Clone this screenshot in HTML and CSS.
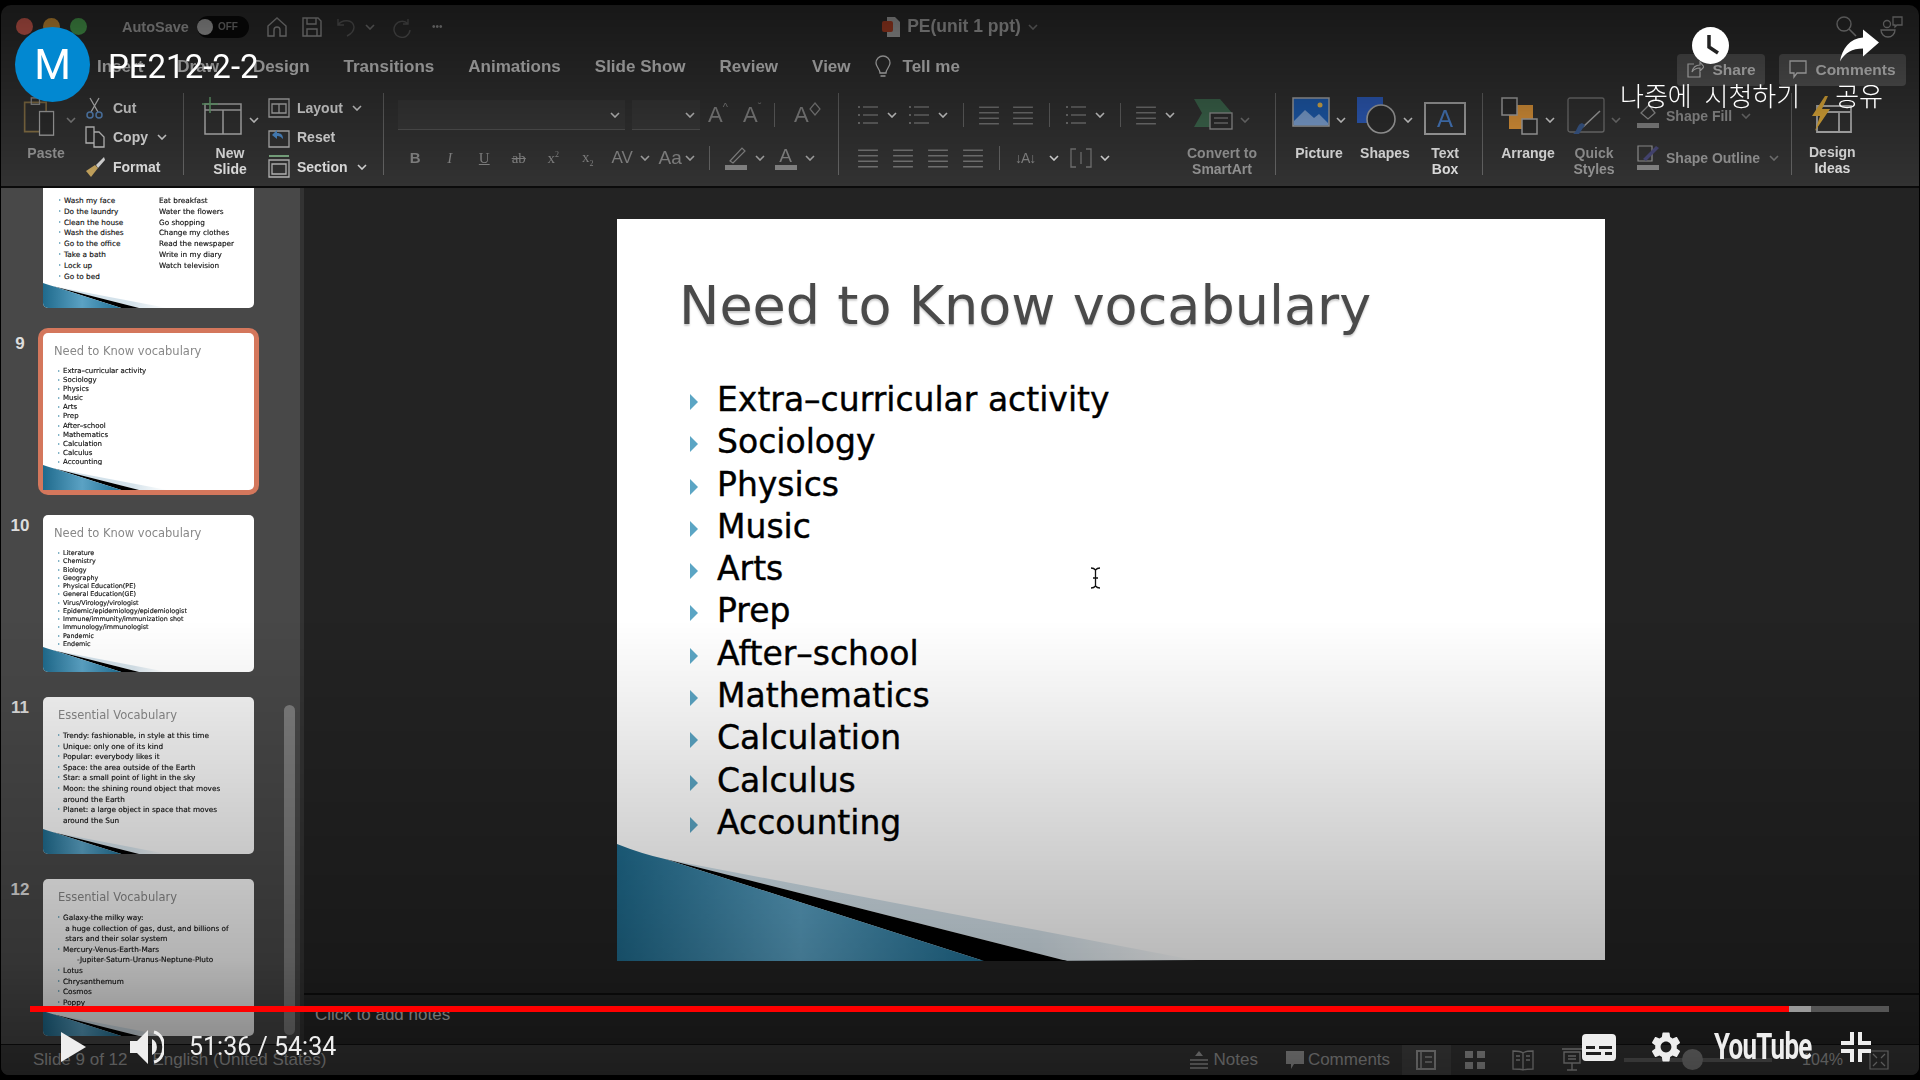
FILE: index.html
```html
<!DOCTYPE html>
<html lang="en">

<head>
  <meta charset="UTF-8">
  <title>PE212-2-2</title>
  <link rel="stylesheet" href="styles.css">
</head>

<body>
  <svg class="defs" width="0" height="0">
    <defs>
      <linearGradient id="blue" x1="0" x2="1" y1="0" y2="0">
        <stop offset="0" stop-color="#1f6a8c" />
        <stop offset=".5" stop-color="#5ba2c4" />
        <stop offset="1" stop-color="#1f6f94" />
      </linearGradient>
      <linearGradient id="pale" x1="0" x2="1" y1="0" y2="0">
        <stop offset="0" stop-color="#cfe0ea" />
        <stop offset=".7" stop-color="#d6e3eb" />
        <stop offset="1" stop-color="#d6e3eb" stop-opacity="0" />
      </linearGradient>
      <symbol id="swoosh" viewBox="0 0 988 117">
        <path fill="url(#pale)" d="M48 15 L582 117 L450 117Z" />
        <path fill="#000" d="M48 15 L450 117 L367 117Z" />
        <path fill="url(#blue)" d="M0 0 Q25 10 48 15 L367 117 L0 117Z" />
      </symbol>
      <symbol id="chev" viewBox="0 0 10 6">
        <path d="M1 1l4 4 4-4" fill="none" stroke="currentColor" stroke-width="1.6" />
      </symbol>
      <symbol id="lines" viewBox="0 0 20 20">
        <path d="M1 3h18M1 8h18M1 13h18M1 18h18" fill="none" stroke="currentColor" stroke-width="1.4" />
      </symbol>
      <symbol id="bullets" viewBox="0 0 22 22">
        <path d="M6 3h15M6 11h15M6 19h15" fill="none" stroke="currentColor" stroke-width="1.4" />
        <path d="M1 2h2v2H1zM1 10h2v2H1zM1 18h2v2H1z" fill="currentColor" />
      </symbol>
    </defs>
  </svg>

  <div class="window">
    <header class="titlebar">
      <div class="tb-left">
        <span class="light red"></span><span class="light yellow"></span><span class="light green"></span>
        <span class="autosave">AutoSave</span>
        <span class="toggle"><i></i>OFF</span>
        <svg class="tb-ico" viewBox="0 0 22 22"><path d="M2 10l9-8 9 8v10h-6v-6a3 3 0 0 0-6 0v6H2z" fill="none" stroke="currentColor" stroke-width="1.4" /></svg>
        <svg class="tb-ico" viewBox="0 0 22 22"><path d="M2 2h15l3 3v15H2zM6 2v6h9V2M6 20v-7h10v7" fill="none" stroke="currentColor" stroke-width="1.4" /></svg>
        <svg class="tb-ico dim" viewBox="0 0 22 22"><path d="M2 3v6h6M2 9c4-6 15-6 16 2 0 4-3 7-7 9" fill="none" stroke="currentColor" stroke-width="1.4" /></svg>
        <svg class="chev dim"><use href="#chev" /></svg>
        <svg class="tb-ico dim" viewBox="0 0 22 22"><path d="M17 3v5h-5M17 8a8 8 0 1 0 2 6" fill="none" stroke="currentColor" stroke-width="1.4" /></svg>
        <span class="dots">•••</span>
      </div>
      <div class="doc-title">
        <svg width="18" height="20" viewBox="0 0 18 20"><path d="M5 0h8l5 5v15H5z" fill="#bbb" /><rect x="0" y="4" width="11" height="11" rx="2" fill="#c4492a" /></svg>
        PE(unit 1 ppt)
        <svg class="chev dim"><use href="#chev" /></svg>
      </div>
      <div class="tb-right">
        <svg width="22" height="22" viewBox="0 0 22 22"><circle cx="9" cy="9" r="7" fill="none" stroke="currentColor" stroke-width="1.4" /><path d="M14 14l7 7" stroke="currentColor" stroke-width="1.6" /></svg>
        <svg width="24" height="24" viewBox="0 0 24 24"><path d="M14 2h9v8h-5l-2 2v-2h-2z M2 15h14a7 7 0 0 1-14 0z" fill="none" stroke="currentColor" stroke-width="1.3" /><circle cx="8" cy="9" r="3.5" fill="none" stroke="currentColor" stroke-width="1.3" /></svg>
      </div>
    </header>

    <nav class="tabs">
      <span>Insert</span><span>Draw</span><span>Design</span><span>Transitions</span><span>Animations</span><span>Slide Show</span><span>Review</span><span>View</span>
      <span class="tell">
        <svg width="16" height="24" viewBox="0 0 16 24"><path d="M5 18c0-4-4-6-4-10a7 7 0 0 1 14 0c0 4-4 6-4 10zM5.500 21h5" fill="none" stroke="currentColor" stroke-width="1.3" /></svg>
        Tell me
      </span>
      <div class="tab-btns">
        <button class="tab-btn share"><svg width="18" height="18" viewBox="0 0 18 18"><path d="M8 3H2v13h12v-5M6 11c1-5 4-7 8-7V1l4 5-4 4V7c-4 0-6 1-8 4z" fill="none" stroke="currentColor" stroke-width="1.2" /></svg>Share</button>
        <button class="tab-btn"><svg width="18" height="20" viewBox="0 0 18 20"><path d="M1 1h16v12H8l-3 4v-4H1z" fill="none" stroke="currentColor" stroke-width="1.3" /></svg>Comments</button>
      </div>
    </nav>

    <section class="ribbon">
      <div class="grp g-clip">
        <div class="big">
          <div class="big-ico paste-ico">
            <svg width="38" height="40" viewBox="0 0 46 44" preserveAspectRatio="none"><path d="M2 6h26v32H2z" fill="none" stroke="#8a7448" stroke-width="2" /><rect x="10" y="1" width="10" height="7" fill="none" stroke="#999" stroke-width="1.5" /><rect x="20" y="16" width="17" height="26" fill="#2e2e2e" stroke="#aaa" stroke-width="1.500" /></svg>
            <svg class="chev dim"><use href="#chev" /></svg>
          </div>
          <span class="lbl dim-t">Paste</span>
        </div>
        <div class="small-col">
          <div class="small"><svg width="20" height="22" viewBox="0 0 20 22"><path d="M5 1l8 14M14 1L6 15" stroke="#ccc" stroke-width="1.300" fill="none" /><circle cx="5" cy="18" r="3" fill="none" stroke="#5c8cc4" stroke-width="1.500" /><circle cx="14" cy="18" r="3" fill="none" stroke="#5c8cc4" stroke-width="1.500" /></svg>Cut</div>
          <div class="small"><svg width="22" height="22" viewBox="0 0 22 22"><path d="M2 1h8v16H2zM10 6h5l5 5v10h-10z" fill="#2e2e2e" stroke="#ccc" stroke-width="1.300" /></svg>Copy <svg class="chev"><use href="#chev" /></svg></div>
          <div class="small"><svg width="22" height="22" viewBox="0 0 22 22"><path d="M20 1l-8 8 2 3 7-8z" fill="#ddd" /><path d="M11 9l-9 6 5 6 7-9z" fill="#c9a860" /></svg>Format</div>
        </div>
      </div>

      <div class="grp g-slides">
        <div class="big">
          <div class="big-ico">
            <svg width="42" height="40" viewBox="0 0 42 40"><path d="M4 7h36v30H4zM4 13h36M22 13v24" fill="none" stroke="#bbb" stroke-width="1.500" /><path d="M9 0v16M1 7h16" stroke="#6fae7a" stroke-width="1.500" /></svg>
            <svg class="chev"><use href="#chev" /></svg>
          </div>
          <span class="lbl">New<br>Slide</span>
        </div>
        <div class="small-col">
          <div class="small"><svg width="22" height="22" viewBox="0 0 22 22"><path d="M1 2h20v18H1zM4 7h14v9H4zM11 7v9" fill="none" stroke="#bbb" stroke-width="1.300" /></svg>Layout <svg class="chev"><use href="#chev" /></svg></div>
          <div class="small"><svg width="22" height="22" viewBox="0 0 22 22"><path d="M1 5h20v16H1z" fill="none" stroke="#bbb" stroke-width="1.300" /><path d="M4 9l5-5v3c4 0 6 2 6 6-2-2-3-3-6-3v3z" fill="#4f8fd0" /></svg>Reset</div>
          <div class="small"><svg width="22" height="24" viewBox="0 0 22 24"><path d="M1 1h20" stroke="#7fae86" stroke-width="2" /><path d="M1 5h20v17H1zM4 9h14v10H4z" fill="none" stroke="#bbb" stroke-width="1.300" /></svg>Section <svg class="chev"><use href="#chev" /></svg></div>
        </div>
      </div>

      <div class="grp g-font">
        <div class="row">
          <span class="select wide"><svg class="chev"><use href="#chev" /></svg></span>
          <span class="select narrow"><svg class="chev"><use href="#chev" /></svg></span>
          <span class="glyph big-a g1">A<sup>^</sup></span>
          <span class="glyph big-a g2">A<sup>ˇ</sup></span>
          <span class="sep"></span>
          <span class="glyph big-a g3">A<svg width="12" height="14" viewBox="0 0 12 14"><path d="M6 1l5 6-5 6-5-6z" fill="none" stroke="currentColor" stroke-width="1.200" /></svg></span>
        </div>
        <div class="row row2">
          <span class="slot"><b>B</b></span><span class="slot"><i>I</i></span><span class="slot"><u>U</u></span><span class="slot"><s>ab</s></span>
          <span class="slot">x<sup>2</sup></span><span class="slot">x<sub>2</sub></span><span class="slot small-t">AV</span>
          <svg class="chev"><use href="#chev" /></svg>
          <span class="glyph aa">Aa</span>
          <svg class="chev"><use href="#chev" /></svg>
          <span class="sep sep-a"></span>
          <span class="colour"><svg width="22" height="18" viewBox="0 0 22 18"><path d="M5 14L17 1l3 3L8 16z" fill="none" stroke="currentColor" stroke-width="1.200" /></svg><i></i></span>
          <svg class="chev"><use href="#chev" /></svg>
          <span class="colour text-col">A<i></i></span>
          <svg class="chev"><use href="#chev" /></svg>
        </div>
      </div>

      <div class="grp g-para">
        <div class="para-rows">
          <div class="row">
            <svg class="list"><use href="#bullets" /></svg><svg class="chev"><use href="#chev" /></svg>
            <svg class="list"><use href="#bullets" /></svg><svg class="chev"><use href="#chev" /></svg>
            <span class="sep"></span>
            <svg class="list"><use href="#lines" /></svg><svg class="list"><use href="#lines" /></svg>
            <span class="sep"></span>
            <svg class="list"><use href="#bullets" /></svg><svg class="chev"><use href="#chev" /></svg>
            <span class="sep"></span>
            <svg class="list"><use href="#lines" /></svg><svg class="chev"><use href="#chev" /></svg>
          </div>
          <div class="row row-al">
            <svg class="list"><use href="#lines" /></svg><svg class="list"><use href="#lines" /></svg>
            <svg class="list"><use href="#lines" /></svg><svg class="list"><use href="#lines" /></svg>
            <span class="sep"></span>
            <span class="txt-dir">↓A↓</span><svg class="chev"><use href="#chev" /></svg>
            <svg class="list" viewBox="0 0 22 22"><path d="M6 2H1v18h5M16 2h5v18h-5M11 5v12" fill="none" stroke="currentColor" stroke-width="1.300" /></svg><svg class="chev"><use href="#chev" /></svg>
          </div>
        </div>
        <div class="big dim-b">
          <div class="big-ico">
            <svg width="40" height="34" viewBox="0 0 40 34"><path d="M0 2h26l12 14-10 14H0l8-14z" fill="#3f6a50" /><rect x="16" y="16" width="22" height="16" fill="#2e2e2e" stroke="#999" stroke-width="1.300" /><path d="M20 21h14M20 26h14" stroke="#999" /></svg>
            <svg class="chev"><use href="#chev" /></svg>
          </div>
          <span class="lbl">Convert to<br>SmartArt</span>
        </div>
      </div>

      <div class="grp g-insert">
        <div class="big">
          <div class="big-ico">
            <svg width="38" height="30" viewBox="0 0 38 30"><rect x="1" y="1" width="36" height="28" fill="#1f5fb5" stroke="#aaa" stroke-width="1.500" /><path d="M2 24l11-11 9 8 5-4 9 9v2H2z" fill="#cfe0f5" opacity=".55" /><circle cx="28" cy="8" r="2.500" fill="#e2b650" /></svg>
            <svg class="chev"><use href="#chev" /></svg>
          </div>
          <span class="lbl">Picture</span>
        </div>
        <div class="big">
          <div class="big-ico">
            <svg width="40" height="38" viewBox="0 0 40 38"><rect x="0" y="0" width="26" height="26" fill="#2f5fc0" /><circle cx="24" cy="22" r="14" fill="#2e2e2e" stroke="#aaa" stroke-width="1.600" /></svg>
            <svg class="chev"><use href="#chev" /></svg>
          </div>
          <span class="lbl">Shapes</span>
        </div>
        <div class="big">
          <div class="big-ico">
            <div class="textbox">A</div>
          </div>
          <span class="lbl">Text<br>Box</span>
        </div>
      </div>

      <div class="grp g-arrange">
        <div class="big">
          <div class="big-ico">
            <svg width="38" height="38" viewBox="0 0 38 38"><rect x="8" y="8" width="24" height="24" fill="#e49a3c" /><rect x="1" y="1" width="15" height="17" fill="#2e2e2e" stroke="#aaa" stroke-width="1.500" /><rect x="21" y="22" width="15" height="15" fill="#2e2e2e" stroke="#aaa" stroke-width="1.500" /></svg>
            <svg class="chev"><use href="#chev" /></svg>
          </div>
          <span class="lbl">Arrange</span>
        </div>
        <div class="big dim-b">
          <div class="big-ico">
            <svg width="38" height="38" viewBox="0 0 38 38"><rect x="1" y="1" width="36" height="34" rx="2" fill="none" stroke="#777" stroke-width="1.300" /><path d="M33 14L16 30" stroke="#aaa" stroke-width="1.500" /><path d="M18 28l-6 9h-6c4-2 4-10 9-11z" fill="#3b5a8c" /></svg>
            <svg class="chev"><use href="#chev" /></svg>
          </div>
          <span class="lbl">Quick<br>Styles</span>
        </div>
        <div class="shape-col dim-b">
          <div class="small"><svg width="22" height="26" viewBox="0 0 22 26"><path d="M4 10l8-8 6 8-7 6z" fill="none" stroke="#999" stroke-width="1.300" /><rect y="20" width="22" height="5" fill="#888" /></svg>Shape Fill <svg class="chev"><use href="#chev" /></svg></div>
          <div class="small"><svg width="22" height="26" viewBox="0 0 22 26"><path d="M1 1h14v15H1z" fill="none" stroke="#999" stroke-width="1.200" /><path d="M6 14L19 1l3 2L9 16z" fill="#4a4a7a" /><rect y="20" width="22" height="5" fill="#888" /></svg>Shape Outline <svg class="chev"><use href="#chev" /></svg></div>
        </div>
      </div>

      <div class="g-ideas">
        <div class="big">
          <div class="big-ico">
            <svg width="42" height="38" viewBox="0 0 42 38"><path d="M6 10h34v26H6zM6 16h34M28 16v20" fill="none" stroke="#bbb" stroke-width="1.800" /><path d="M14 0L1 20h8l-5 15L19 13h-8l6-13z" fill="#e9b23c" /></svg>
          </div>
          <span class="lbl">Design<br>Ideas</span>
        </div>
      </div>
    </section>

    <main class="main">
      <aside class="sidebar">
        <div class="thumb-list">
          <div class="thumb-row">
            <span class="num"></span>
            <div class="thumb t8">
              <div class="t-cols">
                <ul>
                  <li>Wash my face</li><li>Do the laundry</li><li>Clean the house</li><li>Wash the dishes</li><li>Go to the office</li><li>Take a bath</li><li>Lock up</li><li>Go to bed</li>
                </ul>
                <ul class="plain">
                  <li>Eat breakfast</li><li>Water the flowers</li><li>Go shopping</li><li>Change my clothes</li><li>Read the newspaper</li><li>Write in my diary</li><li>Watch television</li>
                </ul>
              </div>
              <svg class="t-swoosh"><use href="#swoosh" /></svg>
            </div>
          </div>
          <div class="thumb-row">
            <span class="num">9</span>
            <div class="thumb selected">
              <h4>Need to Know vocabulary</h4>
              <ul>
                <li>Extra–curricular activity</li><li>Sociology</li><li>Physics</li><li>Music</li><li>Arts</li><li>Prep</li><li>After–school</li><li>Mathematics</li><li>Calculation</li><li>Calculus</li><li>Accounting</li>
              </ul>
              <svg class="t-swoosh"><use href="#swoosh" /></svg>
            </div>
          </div>
          <div class="thumb-row">
            <span class="num">10</span>
            <div class="thumb t10">
              <h4>Need to Know vocabulary</h4>
              <ul>
                <li>Literature</li><li>Chemistry</li><li>Biology</li><li>Geography</li><li>Physical Education(PE)</li><li>General Education(GE)</li><li>Virus/Virology/virologist</li><li>Epidemic/epidemiology/epidemiologist</li><li>Immune/immunity/immunization shot</li><li>Immunology/immunologist</li><li>Pandemic</li><li>Endemic</li>
              </ul>
              <svg class="t-swoosh"><use href="#swoosh" /></svg>
            </div>
          </div>
          <div class="thumb-row">
            <span class="num">11</span>
            <div class="thumb t-ess">
              <h4>Essential Vocabulary</h4>
              <ul>
                <li>Trendy: fashionable, in style at this time</li><li>Unique: only one of its kind</li><li>Popular: everybody likes it</li><li>Space: the area outside of the Earth</li><li>Star: a small point of light in the sky</li><li>Moon: the shining round object that moves around the Earth</li><li>Planet: a large object in space that moves around the Sun</li>
              </ul>
              <svg class="t-swoosh"><use href="#swoosh" /></svg>
            </div>
          </div>
          <div class="thumb-row">
            <span class="num">12</span>
            <div class="thumb t-ess">
              <h4>Essential Vocabulary</h4>
              <ul>
                <li>Galaxy-the milky way:<br>&nbsp;a huge collection of gas, dust, and billions of<br>&nbsp;stars and their solar system</li><li>Mercury-Venus-Earth-Mars<br>&nbsp; &nbsp; &nbsp; -Jupiter-Saturn-Uranus-Neptune-Pluto</li><li>Lotus</li><li>Chrysanthemum</li><li>Cosmos</li><li>Poppy</li>
              </ul>
              <svg class="t-swoosh"><use href="#swoosh" /></svg>
            </div>
          </div>
        </div>
        <div class="scrollbar"></div>
      </aside>

      <div class="stage">
        <div class="slide-area">
          <article class="slide">
            <h1>Need to Know vocabulary</h1>
            <ul>
              <li>Extra–curricular activity</li>
              <li>Sociology</li>
              <li>Physics</li>
              <li>Music</li>
              <li>Arts</li>
              <li>Prep</li>
              <li>After–school</li>
              <li>Mathematics</li>
              <li>Calculation</li>
              <li>Calculus</li>
              <li>Accounting</li>
            </ul>
            <svg class="s-swoosh"><use href="#swoosh" /></svg>
            <svg class="ibeam" width="11" height="22" viewBox="0 0 11 22"><path d="M1 1c2 0 3 0 4.500 2C7 1 8 1 10 1M1 21c2 0 3 0 4.500-2 1.500 2 2.500 2 4.500 2M5.500 3v16M3 11h5" fill="none" stroke="#111" stroke-width="1.300" /></svg>
          </article>
        </div>
        <div class="notes">Click to add notes</div>
      </div>
    </main>

    <footer class="status">
      <span>Slide 9 of 12</span>
      <span class="lang">English (United States)</span>
      <div class="status-right">
        <span class="st-item"><svg width="20" height="20" viewBox="0 0 20 20"><path d="M10 1l4 5H6z" fill="currentColor" /><path d="M1 10h18M1 14h18M1 18h18" stroke="currentColor" stroke-width="1.500" /></svg>Notes</span>
        <span class="st-item st-comments"><svg width="18" height="20" viewBox="0 0 18 20"><path d="M0 1h18v13H8l-3 5v-5H0z" fill="currentColor" /></svg>Comments</span>
        <span class="view active"><svg width="20" height="20" viewBox="0 0 20 20"><path d="M1 1h18v18H1z" fill="none" stroke="currentColor" stroke-width="2" /><path d="M5 1v18M9 7h7M9 12h7" stroke="currentColor" stroke-width="1.500" /></svg></span>
        <span class="view"><svg width="22" height="22" viewBox="0 0 22 22"><path d="M1 2h8v7H1zM13 2h8v7h-8zM1 13h8v7H1zM13 13h8v7h-8z" fill="currentColor" /></svg></span>
        <span class="view"><svg width="22" height="22" viewBox="0 0 22 22"><path d="M1 2c4 0 8 0 10 2 2-2 6-2 10-2v18c-4 0-8 0-10 1-2-1-6-1-10-1zM11 4v17M4 7h4M4 11h4M14 7h4M14 11h4" fill="none" stroke="currentColor" stroke-width="1.300" /></svg></span>
        <span class="view"><svg width="22" height="24" viewBox="0 0 22 24"><path d="M1 1h20M3 4h16v11H3zM11 15v7M6 22h10M7 8h8M7 11h8" fill="none" stroke="currentColor" stroke-width="1.400" /></svg></span>
        <span class="zoom-slider"><i></i></span>
        <span class="pct">104%</span>
        <svg class="fit" width="20" height="20" viewBox="0 0 20 20"><path d="M1 1h18v18H1zM4 4l4 4M16 4l-4 4M4 16l4-4M16 16l-4-4" fill="none" stroke="currentColor" stroke-width="1.200" /></svg>
      </div>
    </footer>
  </div>

  <div class="shade"></div>

  <div class="yt-top">
    <div class="avatar">M</div>
    <div class="yt-title">PE212-2-2</div>
    <div class="yt-acts">
      <div class="yt-act">
        <svg width="37" height="37" viewBox="0 0 37 37"><circle cx="18.500" cy="18.500" r="18.500" fill="#fff" /><path d="M17 8v12l9 6" fill="none" stroke="#222" stroke-width="3.500" /></svg>
        <span>나중에 시청하기</span>
      </div>
      <div class="yt-act">
        <svg width="40" height="32" viewBox="0 0 40 32"><path d="M24 0l16 13-16 14v-8C13 19 6 23 1 32 3 19 11 9 24 8z" fill="#fff" /></svg>
        <span>공유</span>
      </div>
    </div>
  </div>

  <div class="yt-progress"><i class="played"></i><i class="buffer"></i></div>

  <div class="yt-controls">
    <svg class="play" width="25" height="30" viewBox="0 0 25 30"><path d="M0 0l25 15L0 30z" fill="#eee" /></svg>
    <svg class="vol" width="34" height="34" viewBox="0 0 34 34"><path d="M0 11h7L18 0v34L7 23H0z" fill="#eee" /><path d="M22 9a9 9 0 0 1 0 16z" fill="#eee" /><path d="M24 2c13 3 13 27 0 30" fill="none" stroke="#eee" stroke-width="3" /></svg>
    <span class="time">51:36 / 54:34</span>
    <div class="yt-right">
      <svg width="34" height="27" viewBox="0 0 34 27"><path fill-rule="evenodd" d="M4 0h26a4 4 0 0 1 4 4v19a4 4 0 0 1-4 4H4a4 4 0 0 1-4-4V4a4 4 0 0 1 4-4zM4 12v3h9v-3zM17 12v3h13v-3zM4 18v3h15v-3zM23 18v3h7v-3z" fill="#eee" /></svg>
      <svg class="gear" width="36" height="36" viewBox="0 0 24 24"><path fill="#eee" d="M19.140 12.940c.04-.3.06-.61.06-.94 0-.32-.02-.64-.07-.94l2.030-1.580c.18-.14.23-.41.12-.61l-1.920-3.320c-.12-.22-.37-.29-.59-.22l-2.390.96c-.5-.38-1.030-.7-1.620-.94l-.36-2.540c-.04-.24-.24-.41-.48-.41h-3.840c-.24 0-.43.17-.47.41l-.36 2.540c-.59.24-1.130.57-1.620.94l-2.390-.96c-.22-.08-.47 0-.59.22L2.740 8.870c-.12.21-.08.47.12.61l2.030 1.580c-.05.3-.09.63-.09.94s.02.64.07.94l-2.030 1.580c-.18.14-.23.41-.12.61l1.920 3.320c.12.22.37.29.59.22l2.390-.96c.5.38 1.030.7 1.620.94l.36 2.540c.05.24.24.41.48.41h3.840c.24 0 .44-.17.47-.41l.36-2.540c.59-.24 1.130-.56 1.620-.94l2.390.96c.22.08.47 0 .59-.22l1.920-3.320c.12-.22.07-.47-.12-.61l-2.010-1.580zM12 15.600c-1.980 0-3.600-1.620-3.600-3.600s1.620-3.600 3.600-3.600 3.600 1.620 3.600 3.600-1.620 3.600-3.600 3.600z" /></svg>
      <span class="yt-logo">YouTube</span>
      <svg class="exit" width="30" height="30" viewBox="0 0 30 30"><path d="M9 0h4v13H0V9h9zM17 0h4v9h9v4H17zM0 17h13v13H9v-9H0zM17 17h13v4h-9v9h-4z" fill="#eee" /></svg>
    </div>
  </div>
</body>

</html>
```
FILE: styles.css
```css
* {
  box-sizing: border-box;
}

html,
body {
  margin: 0;
  height: 100%;
}

body {
  position: relative;
  width: 1920px;
  height: 1080px;
  overflow: hidden;
  background: #000;
  color: #e8e8e8;
  font-family: "Liberation Sans", Arial, sans-serif;
}

.defs {
  position: absolute;
}

ul {
  margin: 0;
  padding: 0;
  list-style: none;
}

.window {
  display: flex;
  flex-direction: column;
  height: 1070px;
  margin: 5px 1px 0;
  background: #333;
  border-radius: 10px 10px 8px 8px;
  overflow: hidden;
}

.chev {
  width: 10px;
  height: 6px;
  flex: none;
  color: #ddd;
}

.chev.dim {
  color: #888;
}

/* title bar */
.titlebar {
  flex: none;
  display: grid;
  grid-template-columns: 1fr auto 1fr;
  align-items: center;
  height: 43px;
  padding: 0 15px 0 15px;
  color: #aaa;
  filter: blur(.4px);
}

.tb-left {
  display: flex;
  align-items: center;
}

.light {
  width: 17px;
  height: 17px;
  margin-right: 10px;
  border-radius: 50%;
}

.red { background: #ef6a5c; }
.yellow { background: #e9a63f; }
.green { background: #56b95c; }

.autosave {
  margin-left: 25px;
  font-size: 14.500px;
  font-weight: 700;
  color: #bbb;
}

.toggle {
  display: flex;
  align-items: center;
  gap: 5px;
  width: 52px;
  height: 22px;
  margin: 0 17px 0 8px;
  border-radius: 11px;
  background: #0c0c0c;
  font-size: 10px;
  font-weight: 700;
  color: #888;
}

.toggle i {
  width: 16px;
  height: 16px;
  border-radius: 50%;
  background: #bbb;
}

.tb-ico {
  width: 22px;
  height: 22px;
  margin-right: 13px;
}

.tb-ico.dim {
  color: #666;
  margin-right: 7px;
}

.titlebar .chev.dim {
  margin-right: 16px;
}

.dots {
  font-size: 10px;
  letter-spacing: 0;
  margin-left: 12px;
}

.doc-title {
  display: flex;
  align-items: center;
  gap: 7px;
  font-size: 17.500px;
  font-weight: 700;
  color: #bbb;
}

.doc-title .chev.dim {
  margin-right: 0;
}

.tb-right {
  display: flex;
  justify-content: flex-end;
  gap: 22px;
  margin-right: 1px;
}

/* tabs */
.tabs {
  flex: none;
  display: flex;
  align-items: center;
  gap: 34px;
  height: 44px;
  padding: 0 13px 6px 96px;
  font-size: 17px;
  font-weight: 700;
  color: #ddd;
  filter: blur(.4px);
}

.tell {
  display: flex;
  align-items: center;
  gap: 12px;
  margin-left: -10px;
}

.tab-btns {
  display: flex;
  gap: 14px;
  margin: 6px 0 0 auto;
}

.tab-btn {
  display: flex;
  align-items: center;
  justify-content: center;
  gap: 8px;
  width: 127px;
  height: 32px;
  border: 0;
  border-radius: 4px;
  background: #5a5a5a;
  color: #ddd;
  font: 700 15.500px "Liberation Sans", Arial, sans-serif;
}

.tab-btn.share {
  width: 88px;
}

/* ribbon */
.ribbon {
  flex: none;
  display: flex;
  height: 96px;
  padding-bottom: 2px;
  border-bottom: 2px solid #0c0c0c;
  font-size: 14px;
  font-weight: 700;
  filter: blur(.35px);
}

.grp {
  position: relative;
  display: flex;
  flex: none;
  height: 82px;
  margin-top: 1px;
  border-right: 1px solid #666;
}

.g-clip { width: 183px; padding-left: 22px; gap: 8px; }
.g-slides { width: 200px; padding-left: 17px; gap: 9px; }
.g-font { width: 455px; padding: 7px 0 0 14px; flex-direction: column; gap: 13px; }
.g-para { width: 437px; padding: 7px 0 0 18px; gap: 12px; }
.g-insert { width: 207px; padding-left: 16px; gap: 11px; }
.g-arrange { width: 309px; padding-left: 18px; gap: 12px; }
.g-ideas { padding-left: 17px; }

.big {
  display: flex;
  flex-direction: column;
  align-items: center;
  flex: none;
  margin-top: 4px;
}

.g-para .big {
  margin-top: -3px;
}

.big-ico {
  display: flex;
  flex: none;
  align-items: flex-start;
  gap: 6px;
  height: 48px;
}

.paste-ico {
  gap: 5px;
}

.big-ico .chev {
  margin-top: 20px;
}

.lbl {
  font-size: 14px;
  line-height: 16px;
  text-align: center;
  color: #e6e6e6;
}

.dim-t,
.dim-b .lbl {
  color: #999;
}

.dim-t {
  margin-right: 7px;
}

.dim-b .chev {
  color: #777;
}

.small-col {
  display: flex;
  flex: none;
  flex-direction: column;
}

.small {
  display: flex;
  flex: none;
  align-items: center;
  gap: 7px;
  height: 29.500px;
  color: #e6e6e6;
}

.small svg:first-child {
  width: 22px;
}

.small .chev {
  margin-left: 2px;
}

.shape-col {
  display: flex;
  flex-direction: column;
  gap: 13px;
  margin: 8px 0 0 4px;
}

.shape-col .small {
  color: #999;
}

.row {
  display: flex;
  flex: none;
  align-items: center;
  height: 30px;
  color: #888;
}

.select {
  display: flex;
  align-items: center;
  justify-content: flex-end;
  height: 30px;
  padding-right: 5px;
  border-bottom: 1px solid #555;
  background: #3a3a3a;
}

.select.wide { width: 227px; margin-right: 7px; }
.select.narrow { width: 68px; margin-right: 8px; }

.select .chev {
  color: #ccc;
}

.glyph {
  display: flex;
  align-items: flex-start;
  font-weight: 400;
}

.big-a {
  font-size: 22px;
}

.big-a sup {
  font-size: 11px;
  line-height: 10px;
  vertical-align: top;
}

.g1 { width: 35px; }
.g2 { width: 31px; }
.g3 { margin-left: 19px; }

.sep {
  width: 1px;
  height: 24px;
  background: #666;
}

.slot {
  width: 34.500px;
  font-size: 15px;
  font-weight: 400;
  text-align: center;
  font-family: "Liberation Serif", serif;
}

.slot sup,
.slot sub {
  font-size: 8px;
}

.slot b {
  font-family: "Liberation Sans", Arial, sans-serif;
}

.slot.small-t {
  font-family: "Liberation Sans", Arial, sans-serif;
  font-size: 17px;
}

.row2 .chev {
  margin: 0 9px 0 0;
  color: #aaa;
}

.aa {
  width: 24px;
  font-size: 19px;
  margin-right: 2px;
}

.sep-a {
  margin: 0 15px 0 5px;
}

.colour {
  display: flex;
  flex-direction: column;
  align-items: center;
  width: 22px;
  margin-right: 8px;
  font-size: 19px;
  font-weight: 400;
  line-height: 18px;
}

.colour i {
  width: 22px;
  height: 5px;
  background: #888;
}

.text-col {
  margin-left: 1px;
}

.para-rows {
  display: flex;
  flex: none;
  flex-direction: column;
  gap: 13px;
  width: 318px;
}

.list {
  width: 22px;
  height: 22px;
  flex: none;
  color: #777;
}

.g-para .row {
  gap: 8px;
}

.g-para .row .sep {
  margin: 0 7px;
}

.g-para .row .list + .list {
  margin-left: 4px;
}

.g-para .row .chev + .list {
  margin-left: 3px;
}

.g-para .row-al .list + .list {
  margin-left: 5px;
}

.txt-dir {
  width: 26px;
  font-size: 14px;
  font-weight: 400;
  letter-spacing: -1px;
}

.textbox {
  display: flex;
  align-items: center;
  justify-content: center;
  width: 42px;
  height: 33px;
  margin-top: 5px;
  border: 2px solid #aaa;
  color: #4a7fc8;
  font-size: 24px;
  font-weight: 400;
}

/* main area */
.main {
  flex: 1;
  display: flex;
  min-height: 0;
}

.sidebar {
  position: relative;
  flex: none;
  width: 303px;
  border-right: 4px solid #333;
  background: #484848;
  overflow: hidden;
}

.thumb-list {
  display: flex;
  flex-direction: column;
  gap: 25px;
  margin-top: -37px;
}

.thumb-row {
  display: flex;
}

.num {
  flex: none;
  width: 42px;
  padding-right: 4px;
  font-size: 17px;
  font-weight: 700;
  line-height: 22px;
  text-align: center;
  color: #ddd;
}

.thumb {
  display: flex;
  flex-direction: column;
  flex: none;
  width: 211px;
  height: 157px;
  border-radius: 5px;
  background: #fff;
  color: #111;
  font-family: "DejaVu Sans", sans-serif;
  font-size: 7px;
  overflow: hidden;
  filter: blur(.3px);
}

.thumb.selected {
  box-shadow: 0 0 0 5px #d4775c;
  overflow: visible;
}

.thumb h4 {
  flex: none;
  margin: 11px 0 9px 11px;
  font-size: 11.500px;
  font-weight: 400;
  line-height: 14px;
  color: #888;
}

.thumb ul {
  flex: 1;
  min-height: 0;
  padding-left: 20px;
  line-height: 9.100px;
  overflow: hidden;
  -webkit-text-stroke: .15px #111;
}

.thumb li {
  position: relative;
}

.thumb li::before {
  content: "";
  position: absolute;
  left: -5px;
  top: 3px;
  border-left: 2px solid #5a9ab5;
  border-top: 1.500px solid transparent;
  border-bottom: 1.500px solid transparent;
}

.t10 ul {
  font-size: 6.400px;
  line-height: 8.270px;
}

.t-ess {
  background: #f6f6f6;
}

.t-ess h4 {
  margin: 11px 0 9px 15px;
}

.t-ess ul {
  font-size: 7.300px;
  line-height: 10.600px;
  padding-right: 12px;
}

.t-cols {
  flex: 1;
  display: flex;
  min-height: 0;
  padding-top: 45px;
  font-size: 7.300px;
}

.t-cols ul {
  flex: none;
  width: 116px;
  padding-left: 21px;
  line-height: 10.800px;
}

.t-cols ul.plain {
  padding-left: 0;
}

.t-cols .plain li::before {
  display: none;
}

.t-swoosh {
  flex: none;
  width: 100%;
  height: 25px;
  display: block;
}

.scrollbar {
  position: absolute;
  left: 283px;
  top: 517px;
  width: 11px;
  height: 330px;
  border-radius: 6px;
  background: #7c7c7c;
}

.stage {
  flex: 1;
  display: flex;
  flex-direction: column;
  min-width: 0;
}

.slide-area {
  flex: 1;
  padding: 31px 0 0 313px;
  background: #232323;
}

.slide {
  position: relative;
  display: flex;
  flex-direction: column;
  width: 988px;
  height: 741px;
  background: #fff;
  font-family: "DejaVu Sans", sans-serif;
}

.slide h1 {
  flex: none;
  margin: 52px 0 0 62px;
  font-size: 54px;
  font-weight: 400;
  line-height: 70px;
  color: #4a4a4a;
  text-shadow: 0 2px 2px rgba(0, 0, 0, .2);
}

.slide ul {
  flex: 1;
  margin: 38px 0 0 100px;
  font-size: 33px;
  line-height: 42.300px;
  color: #000;
  -webkit-text-stroke: .4px #000;
}

.slide li {
  position: relative;
}

.slide li::before {
  content: "";
  position: absolute;
  left: -27px;
  top: 15px;
  border-left: 8px solid #5ba5c4;
  border-top: 8px solid transparent;
  border-bottom: 8px solid transparent;
}

.s-swoosh {
  flex: none;
  display: block;
  width: 988px;
  height: 117px;
}

.ibeam {
  position: absolute;
  left: 473px;
  top: 348px;
}

.notes {
  flex: none;
  height: 51px;
  padding: 10px 11px 0;
  border-top: 2px solid #0e0e0e;
  background: #262626;
  font-size: 17px;
  color: #bbb;
}

/* status bar */
.status {
  flex: none;
  display: flex;
  align-items: center;
  height: 31px;
  padding-left: 32px;
  border-top: 1px solid #111;
  background: #3a3a3a;
  font-size: 17px;
  color: #aaa;
}

.lang {
  margin-left: 25px;
}

.status-right {
  display: flex;
  align-items: center;
  height: 100%;
  margin-left: auto;
}

.st-item {
  display: flex;
  align-items: center;
  gap: 4px;
}

.st-comments {
  margin: 0 12px 0 28px;
}

.view {
  display: flex;
  align-items: center;
  justify-content: center;
  width: 48.500px;
  height: 100%;
}

.view.active {
  background: #4a4a4a;
}

.zoom-slider {
  position: relative;
  display: block;
  width: 148px;
  height: 4px;
  margin: 0 30px 0 28px;
  background: #666;
}

.zoom-slider i {
  position: absolute;
  left: 58px;
  top: -9px;
  width: 21px;
  height: 21px;
  border-radius: 50%;
  background: #888;
}

.pct {
  margin-right: 26px;
  font-size: 16px;
}

.fit {
  margin-right: 30px;
}

/* video player overlay */
.shade {
  position: absolute;
  inset: 0;
  pointer-events: none;
  background:
    linear-gradient(rgba(0, 0, 0, .55) 0, rgba(0, 0, 0, .12) 150px, rgba(0, 0, 0, 0) 190px),
    linear-gradient(rgba(0, 0, 0, 0) 620px, rgba(0, 0, 0, .06) 700px, rgba(0, 0, 0, .14) 800px, rgba(0, 0, 0, .27) 960px, rgba(0, 0, 0, .5) 1080px);
}

.yt-top {
  position: absolute;
  top: 27px;
  left: 15px;
  right: 37px;
  display: flex;
}

.avatar {
  flex: none;
  width: 75px;
  height: 75px;
  border-radius: 50%;
  background: #0288d1;
  color: #fff;
  font: 400 42px/75px Roboto, sans-serif;
  text-align: center;
}

.yt-title {
  margin: 21px 0 0 18px;
  font: 400 33px/38px Roboto, sans-serif;
  color: #fff;
}

.yt-acts {
  display: flex;
  gap: 35px;
  margin-left: auto;
}

.yt-act {
  display: flex;
  flex-direction: column;
  align-items: center;
  font: 300 26px/30px "Noto Sans CJK KR", Roboto, sans-serif;
  word-spacing: 7px;
  color: #fff;
}

.yt-act svg {
  flex: none;
  height: 37px;
  margin-bottom: 16px;
}

.yt-progress {
  position: absolute;
  left: 30px;
  top: 1006px;
  width: 1859px;
  height: 6px;
  background: #555;
}

.yt-progress i {
  position: absolute;
  left: 0;
  top: 0;
  height: 100%;
}

.yt-progress .buffer {
  width: 1781px;
  background: #999;
}

.yt-progress .played {
  z-index: 1;
  width: 1759px;
  background: #f00;
}

.yt-controls {
  position: absolute;
  left: 61px;
  right: 49px;
  top: 1030px;
  height: 34px;
  display: flex;
  align-items: center;
}

.vol {
  margin-left: 44px;
}

.time {
  margin-left: 25px;
  font: 400 25px/34px Roboto, sans-serif;
  color: #eee;
}

.yt-right {
  display: flex;
  align-items: center;
  margin-left: auto;
}

.gear {
  margin: 0 30px 0 32px;
}

.yt-logo {
  display: block;
  width: 96px;
  margin-right: 31px;
  font: 700 36px/34px Roboto, sans-serif;
  letter-spacing: -1px;
  color: #eee;
  white-space: nowrap;
  transform: scaleX(.72);
  transform-origin: left center;
}
```
